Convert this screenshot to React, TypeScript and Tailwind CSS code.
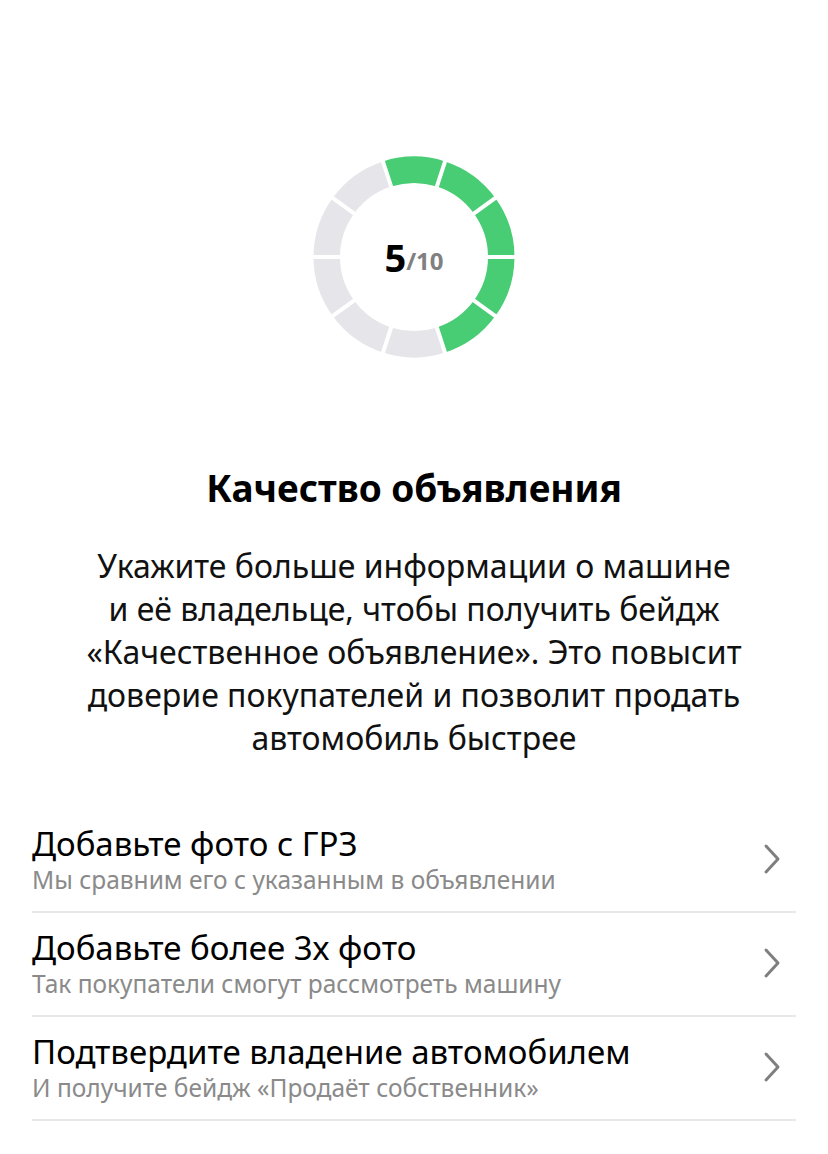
import React from "react";

const R_OUT = 100.5;
const R_IN = 74;

function pt(r: number, deg: number) {
  const a = ((deg - 90) * Math.PI) / 180;
  return [r * Math.cos(a), r * Math.sin(a)];
}

function sector(a0: number, a1: number) {
  const [x0, y0] = pt(R_OUT, a0);
  const [x1, y1] = pt(R_OUT, a1);
  const [x2, y2] = pt(R_IN, a1);
  const [x3, y3] = pt(R_IN, a0);
  return `M${x0} ${y0} A${R_OUT} ${R_OUT} 0 0 1 ${x1} ${y1} L${x2} ${y2} A${R_IN} ${R_IN} 0 0 0 ${x3} ${y3} Z`;
}

function Ring() {
  const segs = Array.from({ length: 10 }, (_, i) => i);
  return (
    <svg width="206" height="206" viewBox="-103 -103 206 206">
      {segs.map((i) => (
        <path
          key={i}
          d={sector(-18 + i * 36, 18 + i * 36)}
          fill={i < 5 ? "#48CD74" : "#E6E6EA"}
        />
      ))}
      {segs.map((i) => {
        const [x0, y0] = pt(R_IN - 4, 18 + i * 36);
        const [x1, y1] = pt(R_OUT + 4, 18 + i * 36);
        return <line key={"l" + i} x1={x0} y1={y0} x2={x1} y2={y1} stroke="#fff" strokeWidth="4" />;
      })}
    </svg>
  );
}

function Chevron() {
  return (
    <svg width="20" height="32" viewBox="0 0 20 32" fill="none">
      <path d="M4 3 L16 16 L4 29" stroke="#7f7f7f" strokeWidth="3" strokeLinecap="round" strokeLinejoin="round" />
    </svg>
  );
}

const items = [
  { t: "Добавьте фото с ГРЗ", s: "Мы сравним его с указанным в объявлении" },
  { t: "Добавьте более 3х фото", s: "Так покупатели смогут рассмотреть машину" },
  { t: "Подтвердите владение автомобилем", s: "И получите бейдж «Продаёт собственник»" },
];

export default function App() {
  return (
    <div
      className="w-[828px] h-[1154px] bg-white flex flex-col items-center overflow-hidden"
      style={{ fontFamily: '"Noto Sans", "Open Sans", sans-serif' }}
    >
      <div className="mt-[154px] relative w-[206px] h-[206px] shrink-0">
        <Ring />
        <div className="absolute inset-0 flex items-center justify-center">
          <span className="text-[38px] font-bold text-black leading-none">5</span>
          <span className="text-[24px] font-bold text-[#808080] leading-none mt-[8px]">/10</span>
        </div>
      </div>
      <h1 className="mt-[104px] text-[37px] font-bold text-black leading-[48px] whitespace-nowrap">
        Качество объявления
      </h1>
      <p className="mt-[32px] text-[32px] leading-[43px] text-[#111] text-center whitespace-nowrap">
        Укажите больше информации о машине
        <br />и её владельце, чтобы получить бейдж
        <br />«Качественное объявление». Это повысит
        <br />доверие покупателей и позволит продать
        <br />автомобиль быстрее
      </p>
      <div className="mt-[50px] w-full pl-[32px] pr-[32px]">
        {items.map((it) => (
          <div key={it.t} className="flex items-center h-[104px] border-b-2 border-[#e8e8e8]">
            <div className="flex-1 flex flex-col">
              <div className="text-[33px] leading-[40px] text-black whitespace-nowrap">{it.t}</div>
              <div className="text-[24.5px] leading-[32px] text-[#8a8a8a] whitespace-nowrap">{it.s}</div>
            </div>
            <div className="mr-[14px] mt-[-2px]">
              <Chevron />
            </div>
          </div>
        ))}
      </div>
    </div>
  );
}
